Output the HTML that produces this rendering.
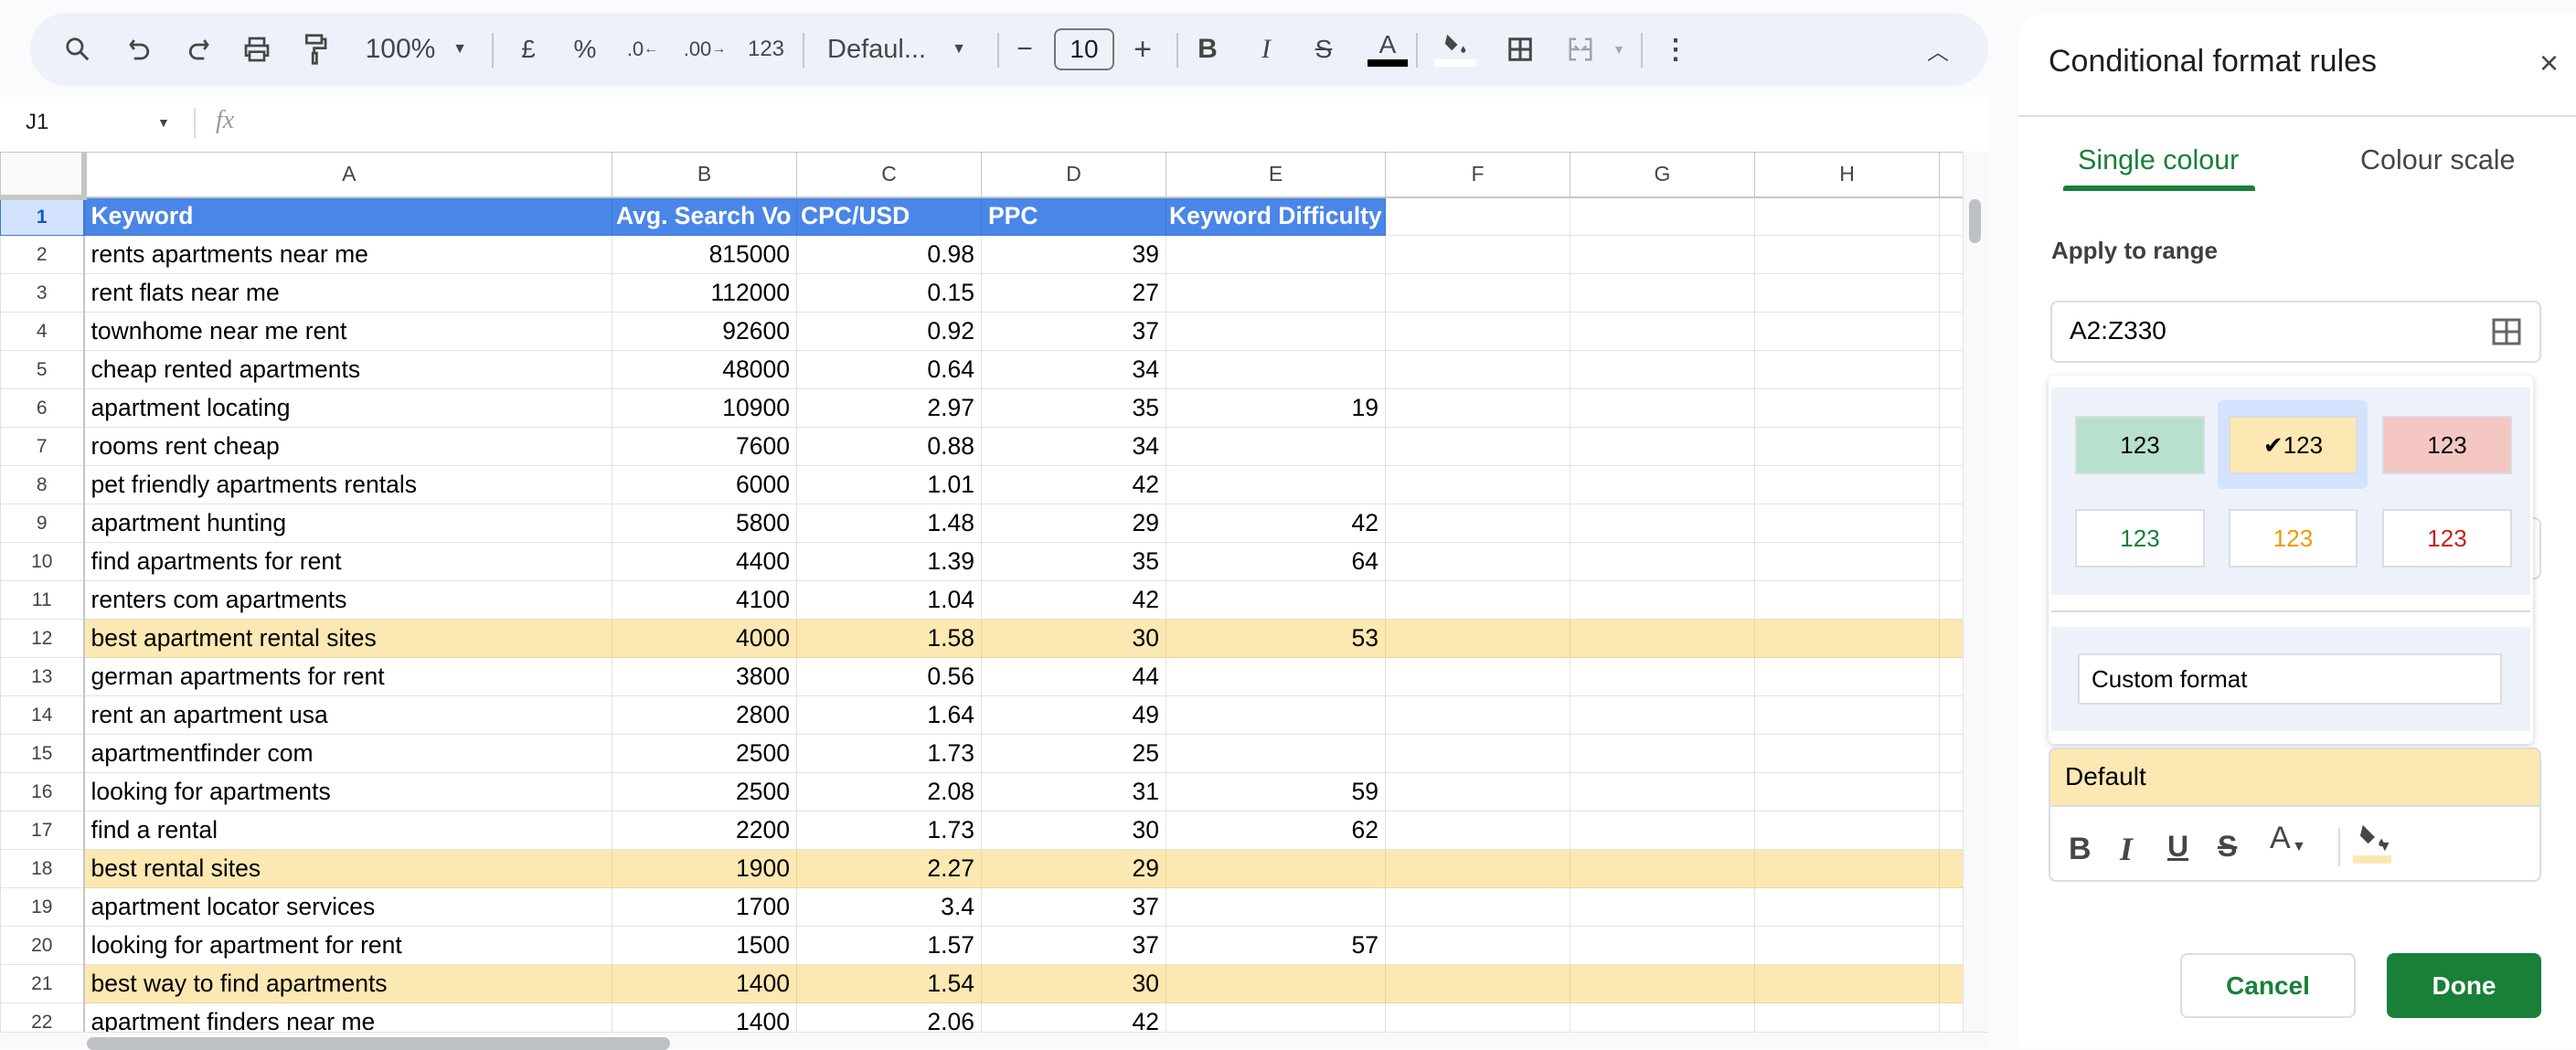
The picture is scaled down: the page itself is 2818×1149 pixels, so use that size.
<!DOCTYPE html>
<html><head><meta charset="utf-8">
<style>
*{box-sizing:border-box;margin:0;padding:0}
body{width:2818px;height:1146px;overflow:hidden;background:#f9fbfd;font-family:"Liberation Sans",Arial,sans-serif;position:relative}
.abs{position:absolute}
#tb{left:33px;top:14px;width:2142px;height:80px;background:#edf2fa;border-radius:40px}
.ti{position:absolute;top:0;height:80px;display:flex;align-items:center;justify-content:center;color:#444746;font-size:28px}
.sep{position:absolute;top:22px;width:2px;height:38px;background:#c7c7c7}
#fb{left:0;top:106px;width:2175px;height:60px;background:#fff}
table{position:absolute;left:0;top:166px;border-collapse:collapse;table-layout:fixed;background:#fff}
td{border:1px solid #e1e3e1;height:42px;font-size:26.5px;color:#000;padding:0 7px;white-space:nowrap;overflow:hidden}
tr.h td{height:49px;text-align:center;font-size:23px;color:#444;border-color:#c4c7c5;border-bottom:2px solid #c4c7c5}
td.n{text-align:center;font-size:21px;color:#444;padding:0;border-right:2px solid #c4c7c5}
td.r{text-align:right}
tr.y td{background:#fce8b2;border-color:#ecd595}
tr.y td.n{background:#fff;border-color:#e1e3e1;border-right:2px solid #c4c7c5}
tr.b td{background:#4a86e8;color:#fff;font-weight:bold;border-color:#3f77d4}
tr.b td.e{background:#fff;border-color:#e1e3e1}
tr.b td.n{background:#d3e3fd;color:#0b57d0;font-weight:bold}
#panel{left:2208px;top:15px;width:610px;height:1131px;background:#fff;border-top-left-radius:28px}
.sw{position:absolute;height:64px;border:2px solid #dadce0;display:flex;align-items:center;justify-content:center;font-size:26px}
</style></head><body>
<div id="tb" class="abs">
 <div class="ti" style="left:30px;width:44px"><svg width="30" height="30" viewBox="0 0 24 24"><circle cx="9.5" cy="9.5" r="6.5" fill="none" stroke="#444746" stroke-width="2.2"/><path d="M14.5 14.5L21 21" stroke="#444746" stroke-width="2.4"/></svg></div>
 <div class="ti" style="left:100px;width:40px"><svg width="26" height="30" viewBox="0 0 20 24"><path d="M5 4L2 8l3 4M2 8h9a6 6 0 010 12H5" fill="none" stroke="#444746" stroke-width="2.2"/></svg></div>
 <div class="ti" style="left:164px;width:40px"><svg width="26" height="30" viewBox="0 0 20 24"><path d="M15 4l3 4-3 4M18 8H9a6 6 0 000 12h6" fill="none" stroke="#444746" stroke-width="2.2"/></svg></div>
 <div class="ti" style="left:228px;width:40px"><svg width="32" height="32" viewBox="0 0 24 24"><path d="M6 8V3h12v5M6 17H3V9h18v8h-3M6 14h12v7H6z" fill="none" stroke="#444746" stroke-width="2"/></svg></div>
 <div class="ti" style="left:292px;width:40px"><svg width="28" height="36" viewBox="0 0 20 26"><path d="M3 2h12v6H3zM15 5h3v7H9v4M8 16h3v8H8z" fill="none" stroke="#444746" stroke-width="2"/></svg></div>
 <div class="ti" style="left:355px;width:100px;font-size:30px">100%</div>
 <div class="ti" style="left:460px;width:20px;font-size:16px">▼</div>
 <div class="sep" style="left:505px"></div>
 <div class="ti" style="left:530px;width:30px">£</div>
 <div class="ti" style="left:592px;width:30px">%</div>
 <div class="ti" style="left:650px;width:40px;font-size:22px">.0<sub style="font-size:16px">←</sub></div>
 <div class="ti" style="left:716px;width:44px;font-size:22px">.00<sub style="font-size:16px">→</sub></div>
 <div class="ti" style="left:782px;width:46px;font-size:24px">123</div>
 <div class="sep" style="left:845px"></div>
 <div class="ti" style="left:872px;width:110px;font-size:29px;justify-content:flex-start">Defaul...</div>
 <div class="ti" style="left:1006px;width:20px;font-size:16px">▼</div>
 <div class="sep" style="left:1058px"></div>
 <div class="ti" style="left:1076px;width:24px;font-size:30px">−</div>
 <div class="abs" style="left:1120px;top:17px;width:66px;height:46px;border:2px solid #747775;border-radius:8px;font-size:28px;color:#1f1f1f;display:flex;align-items:center;justify-content:center">10</div>
 <div class="ti" style="left:1202px;width:30px;font-size:34px">+</div>
 <div class="sep" style="left:1254px"></div>
 <div class="ti" style="left:1274px;width:28px;font-weight:bold;font-size:30px">B</div>
 <div class="ti" style="left:1338px;width:28px;font-style:italic;font-size:30px;font-family:'Liberation Serif',serif">I</div>
 <div class="ti" style="left:1400px;width:30px;font-size:28px;text-decoration:line-through">S</div>
 <div class="ti" style="left:1462px;width:46px;flex-direction:column"><span style="font-size:28px;line-height:28px">A</span><span style="display:block;width:44px;height:8px;background:#000;margin-top:2px"></span></div>
 <div class="sep" style="left:1516px"></div>
 <div class="ti" style="left:1536px;width:46px;flex-direction:column"><svg width="30" height="28" viewBox="0 0 24 22"><path d="M5 2l9 9-5 5-6-6z" fill="#444746"/><path d="M19 12c1 2 2 3 2 4a2 2 0 01-4 0c0-1 1-2 2-4z" fill="#444746"/></svg><span style="display:block;width:46px;height:8px;background:#fff;margin-top:2px"></span></div>
 <div class="ti" style="left:1612px;width:36px"><svg width="30" height="30" viewBox="0 0 24 24"><path d="M3 3h18v18H3zM12 3v18M3 12h18" fill="none" stroke="#444746" stroke-width="2.4"/></svg></div>
 <div class="ti" style="left:1678px;width:36px"><svg width="30" height="30" viewBox="0 0 24 24" opacity=".45"><path d="M8 3H3v18h5M16 3h5v18h-5M3 12h7l-3-3M21 12h-7l3-3" fill="none" stroke="#444746" stroke-width="2"/></svg></div>
 <div class="ti" style="left:1728px;width:20px;font-size:14px;color:#aaa">▼</div>
 <div class="sep" style="left:1762px"></div>
 <div class="ti" style="left:1788px;width:24px;font-size:30px;font-weight:bold">⋮</div>
 <div class="ti" style="left:2072px;width:30px;font-size:24px">︿</div>
</div>
<div id="fb" class="abs">
 <div class="abs" style="left:28px;top:14px;font-size:24px;color:#1f1f1f">J1</div>
 <div class="abs" style="left:172px;top:20px;font-size:14px;color:#444">▼</div>
 <div class="abs" style="left:212px;top:12px;width:2px;height:34px;background:#dadce0"></div>
 <div class="abs" style="left:236px;top:10px;font-size:28px;color:#999;font-style:italic;font-family:'Liberation Serif',serif">fx</div>
</div>
<table>
<colgroup><col style="width:91px"><col style="width:578px"><col style="width:202px"><col style="width:202px"><col style="width:202px"><col style="width:240px"><col style="width:202px"><col style="width:202px"><col style="width:202px"><col style="width:26px"></colgroup>
<tr class="h"><td style="background:#f8f9fa;border-right:6px solid #c4c7c5;border-bottom:6px solid #c4c7c5"></td><td>A</td><td>B</td><td>C</td><td>D</td><td>E</td><td>F</td><td>G</td><td>H</td><td></td></tr>
<tr class="b"><td class="n">1</td><td>Keyword</td><td style="padding:0 4px">Avg. Search Vo</td><td style="padding:0 4px">CPC/USD</td><td>PPC</td><td style="padding:0 3px">Keyword Difficulty</td><td class="e"></td><td class="e"></td><td class="e"></td><td class="e"></td></tr>
<tr><td class="n">2</td><td>rents apartments near me</td><td class="r">815000</td><td class="r">0.98</td><td class="r">39</td><td></td><td></td><td></td><td></td><td></td></tr>
<tr><td class="n">3</td><td>rent flats near me</td><td class="r">112000</td><td class="r">0.15</td><td class="r">27</td><td></td><td></td><td></td><td></td><td></td></tr>
<tr><td class="n">4</td><td>townhome near me rent</td><td class="r">92600</td><td class="r">0.92</td><td class="r">37</td><td></td><td></td><td></td><td></td><td></td></tr>
<tr><td class="n">5</td><td>cheap rented apartments</td><td class="r">48000</td><td class="r">0.64</td><td class="r">34</td><td></td><td></td><td></td><td></td><td></td></tr>
<tr><td class="n">6</td><td>apartment locating</td><td class="r">10900</td><td class="r">2.97</td><td class="r">35</td><td class="r">19</td><td></td><td></td><td></td><td></td></tr>
<tr><td class="n">7</td><td>rooms rent cheap</td><td class="r">7600</td><td class="r">0.88</td><td class="r">34</td><td></td><td></td><td></td><td></td><td></td></tr>
<tr><td class="n">8</td><td>pet friendly apartments rentals</td><td class="r">6000</td><td class="r">1.01</td><td class="r">42</td><td></td><td></td><td></td><td></td><td></td></tr>
<tr><td class="n">9</td><td>apartment hunting</td><td class="r">5800</td><td class="r">1.48</td><td class="r">29</td><td class="r">42</td><td></td><td></td><td></td><td></td></tr>
<tr><td class="n">10</td><td>find apartments for rent</td><td class="r">4400</td><td class="r">1.39</td><td class="r">35</td><td class="r">64</td><td></td><td></td><td></td><td></td></tr>
<tr><td class="n">11</td><td>renters com apartments</td><td class="r">4100</td><td class="r">1.04</td><td class="r">42</td><td></td><td></td><td></td><td></td><td></td></tr>
<tr class="y"><td class="n">12</td><td>best apartment rental sites</td><td class="r">4000</td><td class="r">1.58</td><td class="r">30</td><td class="r">53</td><td></td><td></td><td></td><td></td></tr>
<tr><td class="n">13</td><td>german apartments for rent</td><td class="r">3800</td><td class="r">0.56</td><td class="r">44</td><td></td><td></td><td></td><td></td><td></td></tr>
<tr><td class="n">14</td><td>rent an apartment usa</td><td class="r">2800</td><td class="r">1.64</td><td class="r">49</td><td></td><td></td><td></td><td></td><td></td></tr>
<tr><td class="n">15</td><td>apartmentfinder com</td><td class="r">2500</td><td class="r">1.73</td><td class="r">25</td><td></td><td></td><td></td><td></td><td></td></tr>
<tr><td class="n">16</td><td>looking for apartments</td><td class="r">2500</td><td class="r">2.08</td><td class="r">31</td><td class="r">59</td><td></td><td></td><td></td><td></td></tr>
<tr><td class="n">17</td><td>find a rental</td><td class="r">2200</td><td class="r">1.73</td><td class="r">30</td><td class="r">62</td><td></td><td></td><td></td><td></td></tr>
<tr class="y"><td class="n">18</td><td>best rental sites</td><td class="r">1900</td><td class="r">2.27</td><td class="r">29</td><td></td><td></td><td></td><td></td><td></td></tr>
<tr><td class="n">19</td><td>apartment locator services</td><td class="r">1700</td><td class="r">3.4</td><td class="r">37</td><td></td><td></td><td></td><td></td><td></td></tr>
<tr><td class="n">20</td><td>looking for apartment for rent</td><td class="r">1500</td><td class="r">1.57</td><td class="r">37</td><td class="r">57</td><td></td><td></td><td></td><td></td></tr>
<tr class="y"><td class="n">21</td><td>best way to find apartments</td><td class="r">1400</td><td class="r">1.54</td><td class="r">30</td><td></td><td></td><td></td><td></td><td></td></tr>
<tr><td class="n">22</td><td>apartment finders near me</td><td class="r">1400</td><td class="r">2.06</td><td class="r">42</td><td></td><td></td><td></td><td></td><td></td></tr>
</table>
<div class="abs" style="left:2147px;top:166px;width:28px;height:980px;background:#f8f9fa;border-left:1px solid #e1e3e1"></div>
<div class="abs" style="left:2154px;top:218px;width:13px;height:48px;background:#bdc1c6;border-radius:7px"></div>
<div class="abs" style="left:0;top:1129px;width:2175px;height:17px;background:#f8f9fa;border-top:1px solid #e1e3e1"></div>
<div class="abs" style="left:95px;top:1135px;width:638px;height:14px;background:#bdc1c6;border-radius:7px"></div>

<div id="panel" class="abs"></div>
<div class="abs" style="left:2241px;top:48px;font-size:34px;color:#1f1f1f">Conditional format rules</div>
<div class="abs" style="left:2778px;top:48px;font-size:36px;color:#444746">×</div>
<div class="abs" style="left:2208px;top:126px;width:610px;height:2px;background:#dadce0"></div>
<div class="abs" style="left:2273px;top:158px;font-size:30.5px;color:#188038">Single colour</div>
<div class="abs" style="left:2257px;top:203px;width:210px;height:6px;background:#188038;border-radius:3px 3px 0 0"></div>
<div class="abs" style="left:2582px;top:158px;font-size:30.5px;color:#444746">Colour scale</div>
<div class="abs" style="left:2244px;top:259px;font-size:26px;color:#3c4043;font-weight:bold">Apply to range</div>
<div class="abs" style="left:2243px;top:329px;width:537px;height:68px;border:2px solid #dadce0;border-radius:8px;background:#fff"></div>
<div class="abs" style="left:2264px;top:346px;font-size:28px;color:#000">A2:Z330</div>
<svg class="abs" style="left:2726px;top:348px" width="32" height="30" viewBox="0 0 32 30"><path d="M2 2h28v26H2zM16 2v26M2 15h28" fill="none" stroke="#666" stroke-width="3"/></svg>
<div class="abs" style="left:2770px;top:566px;width:10px;height:68px;border:2px solid #dadce0;border-left:none;border-radius:0 8px 8px 0"></div>
<div class="abs" style="left:2241px;top:411px;width:530px;height:403px;background:#fff;border-radius:6px;box-shadow:0 2px 8px rgba(0,0,0,.2)"></div>
<div class="abs" style="left:2244px;top:424px;width:524px;height:227px;background:#edf1f9"></div>
<div class="abs" style="left:2426px;top:438px;width:164px;height:97px;background:#d3e3fd;border-radius:6px"></div>
<div class="sw" style="left:2270px;top:455px;width:142px;background:#b7e1cd">123</div>
<div class="sw" style="left:2438px;top:455px;width:141px;background:#fce8b2">✔123</div>
<div class="sw" style="left:2606px;top:455px;width:142px;background:#f4c7c3">123</div>
<div class="sw" style="left:2270px;top:557px;width:142px;background:#fff;color:#188038">123</div>
<div class="sw" style="left:2438px;top:557px;width:141px;background:#fff;color:#f29900">123</div>
<div class="sw" style="left:2606px;top:557px;width:142px;background:#fff;color:#c5221f">123</div>
<div class="abs" style="left:2244px;top:668px;width:524px;height:2px;background:#dadce0"></div>
<div class="abs" style="left:2244px;top:686px;width:524px;height:114px;background:#edf1f9"></div>
<div class="abs" style="left:2273px;top:715px;width:464px;height:56px;background:#fff;border:2px solid #dadce0;font-size:26px;padding:11px 0 0 13px">Custom format</div>
<div class="abs" style="left:2241px;top:818px;width:539px;height:147px;border:2px solid #dadce0;border-radius:8px;background:#fff;overflow:hidden">
 <div style="height:63px;background:#fce8b2;border-bottom:2px solid #dadce0;font-size:28px;padding:14px 0 0 16px">Default</div>
 <div style="position:absolute;left:20px;top:90px;font-size:34px;font-weight:bold;color:#444746">B</div>
 <div style="position:absolute;left:76px;top:88px;font-size:36px;font-style:italic;color:#444746;font-family:'Liberation Serif',serif;font-weight:bold">I</div>
 <div style="position:absolute;left:128px;top:88px;font-size:32px;color:#444746;text-decoration:underline;font-weight:bold">U</div>
 <div style="position:absolute;left:183px;top:88px;font-size:32px;color:#444746;text-decoration:line-through;font-weight:bold">S</div>
 <div style="position:absolute;left:240px;top:78px;font-size:34px;color:#444746">A</div>
 <div style="position:absolute;left:264px;top:98px;font-size:16px;color:#444746">▼</div>
 <div style="position:absolute;left:315px;top:86px;width:2px;height:42px;background:#dadce0"></div>
 <svg style="position:absolute;left:334px;top:80px" width="36" height="32" viewBox="0 0 24 22"><path d="M5 2l9 9-5 5-6-6z" fill="#444746"/><path d="M19 12c1 2 2 3 2 4a2 2 0 01-4 0c0-1 1-2 2-4z" fill="#444746"/></svg>
 <div style="position:absolute;left:331px;top:116px;width:42px;height:9px;background:#fce8b2"></div>
 <div style="position:absolute;left:358px;top:98px;font-size:16px;color:#444746">▼</div>
</div>
<div class="abs" style="left:2385px;top:1043px;width:192px;height:71px;border:2px solid #dadce0;border-radius:8px;background:#fff;color:#188038;font-size:28px;font-weight:bold;display:flex;align-items:center;justify-content:center">Cancel</div>
<div class="abs" style="left:2611px;top:1043px;width:169px;height:71px;border-radius:8px;background:#188038;color:#fff;font-size:28px;font-weight:bold;display:flex;align-items:center;justify-content:center">Done</div>
</body></html>
